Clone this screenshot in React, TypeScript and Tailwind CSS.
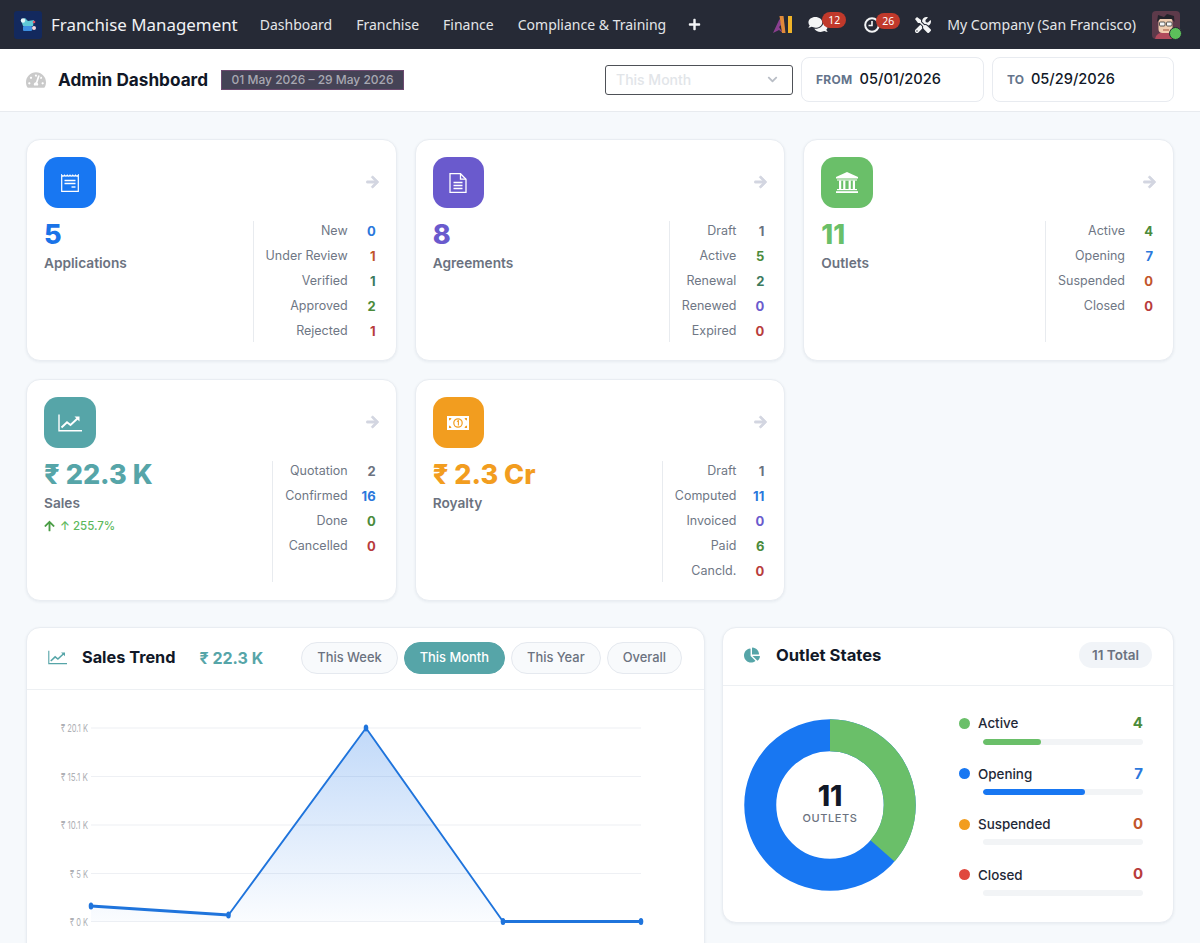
import React from "react";
import { FaArrowRight, FaArrowUp, FaChartPie, FaChevronDown, FaComments, FaPlus, FaTachometerAlt, FaTools } from "react-icons/fa";

const V: Record<string, string> = {
  blue: "text-[#2b78dc]", orange: "text-[#c2552b]", teal: "text-[#3c7a5e]", green: "text-[#4b8b3b]",
  red: "text-[#b83c3c]", gray: "text-[#6b7280]", purple: "text-[#6a5acd]",
};

function LineIcon({ className }: { className: string }) {
  return (
    <svg viewBox="0 0 24 18" className={className} fill="none" stroke="currentColor">
      <path d="M1 0.5V16.8H24" strokeWidth="1.4" />
      <path d="M3.5 13.5L9 8.2L12.5 11L20 4" strokeWidth="1.9" />
      <path d="M16.5 2.6H21.5V7.5Z" fill="currentColor" stroke="none" />
    </svg>
  );
}

function AppIcon() {
  return (
    <svg viewBox="0 0 18 18" className="w-[18px] h-[18px]" fill="none" stroke="white">
      <path d="M0.7 1.2q1.4 2 2.8 0q1.4 2 2.75 0q1.4 2 2.75 0q1.4 2 2.75 0q1.4 2 2.75 0q1.4 2 2.8 0V17.3H0.7Z" strokeWidth="1.2" />
      <path d="M3.5 6.5H14.5M3.5 9.5H14.5" strokeWidth="1.4" />
      <path d="M10.5 13H14.5" strokeWidth="1.4" />
    </svg>
  );
}

function FileIcon() {
  return (
    <svg viewBox="0 0 18 20" className="w-[18px] h-[20px]" fill="none" stroke="white" strokeWidth="1.3">
      <path d="M1 0.7H11.5L17 6.2V19.3H1Z" />
      <path d="M11.5 0.7V6.2H17" />
      <path d="M4.5 9.5H13.5M4.5 12.5H13.5M4.5 15.5H13.5" />
    </svg>
  );
}

function BankIcon() {
  return (
    <svg viewBox="0 0 22 21" className="w-[22px] h-[21px]" fill="white">
      <path d="M11 0L22 5V6.5H0V5Z" />
      <rect x="1" y="7.5" width="20" height="1" />
      <rect x="3" y="8.5" width="2.2" height="8.5" />
      <rect x="7.2" y="8.5" width="2.2" height="8.5" />
      <rect x="12.6" y="8.5" width="2.2" height="8.5" />
      <rect x="16.8" y="8.5" width="2.2" height="8.5" />
      <rect x="1" y="17" width="20" height="1.2" />
      <rect x="0" y="19.2" width="22" height="1.8" />
    </svg>
  );
}

function MoneyIcon() {
  return (
    <svg viewBox="0 0 22 14" className="w-[22px] h-[14px]">
      <path fillRule="evenodd" fill="white" d="M0 0H22V14H0ZM4.5 2H2V4.5Q4 4.2 4.5 2ZM17.5 2Q18 4.2 20 4.5V2ZM2 9.5V12H4.5Q4 9.8 2 9.5ZM20 9.5Q18 9.8 17.5 12H20ZM11 2.2A4.8 4.8 0 1 0 11 11.8A4.8 4.8 0 1 0 11 2.2Z" />
      <circle cx="11" cy="7" r="3.6" fill="white" />
      <path d="M9.9 5.4L11.4 4.7V9.4" stroke="#f29d1f" strokeWidth="1.1" fill="none" />
    </svg>
  );
}

function Card({ icon, bg, color, value, label, stats, trend }: {
  icon: React.ReactNode; bg: string; color: string; value: string; label: string;
  stats: [string, string, string][]; trend?: boolean;
}) {
  return (
    <div className="bg-white rounded-[14px] border border-[#e9edf2] shadow-[0_1px_3px_rgba(30,50,80,0.07)] p-[17px] h-[222px]">
      <div className="flex items-center justify-between h-[51px]">
        <div className={`w-[51.5px] h-[51px] rounded-[14px] flex items-center justify-center ${bg}`}>{icon}</div>
        <FaArrowRight stroke="currentColor" strokeWidth={30} className="w-[13px] h-[14px] mb-[1px] text-[#d3d6e1]" />
      </div>
      <div className="flex justify-between mt-[13px] h-[121px]">
        <div>
          <div className={`text-[27px] leading-[28px] font-extrabold ${color}`}>{value}</div>
          <div className="text-[13.7px] leading-[20px] font-semibold text-[#6b7280] mt-[4px]">{label}</div>
          {trend && (
            <div className="flex items-center text-[11.5px] leading-[16px] font-medium text-[#5cb85c] mt-[5px]">
              <FaArrowUp className="w-[11px] h-[12px] text-[#4a9d45] mr-[5px]" />↑ 255.7%
            </div>
          )}
        </div>
        <div className="border-l border-[#e8ebef] pl-[12px] pr-[3px] flex flex-col gap-[5.1px]">
          {stats.map(([l, v, c]) => (
            <div key={l} className="flex justify-end h-[20px] items-center text-[13px] leading-[20px]">
              <span className="text-[#6f7785] text-[12.5px]">{l}</span>
              <span className={`w-[28px] text-right font-bold ${V[c]}`}>{v}</span>
            </div>
          ))}
        </div>
      </div>
    </div>
  );
}

function Pill({ text, active }: { text: string; active?: boolean }) {
  return (
    <div className={`h-[32px] px-[15px] rounded-full flex items-center text-[12.9px] font-medium border ${active ? "bg-[#56a5a8] border-[#56a5a8] text-white" : "bg-[#f8fafc] border-[#e5e9ef] text-[#6b7280]"}`}>{text}</div>
  );
}

function Legend({ dot, bar, w, label, value, c }: { dot: string; bar: string; w: number; label: string; value: string; c: string }) {
  return (
    <div className="h-[50.4px]">
      <div className="flex items-center h-[20px] pl-[1px]">
        <span className={`w-[11px] h-[11px] rounded-full ${dot}`} />
        <span className="ml-[8px] text-[13.4px] font-medium text-[#1f2937]">{label}</span>
        <span className={`ml-auto text-[15px] font-bold ${V[c]}`}>{value}</span>
      </div>
      <div className="ml-[25px] mt-[5px] h-[6px] rounded-full bg-[#f2f4f6] overflow-hidden">
        <div className={`h-full rounded-full ${bar}`} style={{ width: `${w}%` }} />
      </div>
    </div>
  );
}

function Chart() {
  const ys = [[0, "₹ 20.1 K", 27], [48.5, "₹ 15.1 K", 27], [97, "₹ 10.1 K", 27], [145.5, "₹ 5 K", 18], [193.5, "₹ 0 K", 18]] as [number, string, number][];
  const pts: [number, number][] = [[34, 178], [171.5, 187], [309, 0], [446, 193.5], [584, 193.5]];
  return (
    <svg width="640" height="215" viewBox="0 0 640 215" className="block overflow-visible">
      <defs>
        <linearGradient id="area" x1="0" y1="0" x2="0" y2="1">
          <stop offset="0" stopColor="#1a73e8" stopOpacity="0.27" />
          <stop offset="1" stopColor="#1a73e8" stopOpacity="0.02" />
        </linearGradient>
      </defs>
      {ys.map(([y, t, w]) => (
        <g key={t}>
          <line x1="34" x2="584" y1={y} y2={y} stroke="#eef0f4" strokeWidth="1.2" />
          <text x={31 - w} y={y + 4} textLength={w} lengthAdjust="spacingAndGlyphs" fontSize="11" fill="#aeb0b5" fontFamily="Inter, sans-serif">{t}</text>
        </g>
      ))}
      <path d="M34 178L171.5 187L309 0L446 193.5L584 193.5L34 193.5Z" fill="url(#area)" />
      <path d="M34 178L171.5 187" stroke="#1f74dc" strokeWidth="3" fill="none" />
      <path d="M171.5 187L309 0L446 193.5" stroke="#1f74dc" strokeWidth="1.9" fill="none" />
      <path d="M446 193.5L584 193.5" stroke="#1f74dc" strokeWidth="3" fill="none" />
      {pts.map(([x, y]) => <ellipse key={x} cx={x} cy={y} rx="2.3" ry="3.5" fill="#1f74dc" />)}
    </svg>
  );
}

function Donut() {
  const r = 69.75;
  const c = 2 * Math.PI * r;
  const g = (c * 4) / 11;
  return (
    <div className="relative w-[172px] h-[172px]">
      <svg viewBox="0 0 172 172" className="w-full h-full -rotate-90">
        <circle cx="86" cy="86" r={r} fill="none" stroke="#1877f2" strokeWidth="32" />
        <circle cx="86" cy="86" r={r} fill="none" stroke="#6abf69" strokeWidth="32" strokeDasharray={`${g} ${c - g}`} />
      </svg>
      <div className="absolute inset-0 flex flex-col items-center justify-center pb-[5px]">
        <div className="text-[28px] leading-[30px] font-extrabold text-[#111827]">11</div>
        <div className="text-[11px] leading-[14px] font-medium tracking-[0.6px] text-[#6b7280]">OUTLETS</div>
      </div>
    </div>
  );
}

function Avatar() {
  return (
    <div className="relative w-[28px] h-[28px]">
      <svg viewBox="0 0 28 28" className="w-full h-full rounded-[4px]">
        <rect width="28" height="28" fill="#5d3a4a" />
        <path d="M3 28Q4 21 14 21Q24 21 25 28Z" fill="#b04a5c" />
        <rect x="6.5" y="7" width="14" height="15" rx="4" fill="#f1cdb0" />
        <path d="M5 11L6 4L12 6L15 3L22 5L22.5 11L20 8H8Z" fill="#23232b" />
        <rect x="7.5" y="11" width="5.5" height="4" rx="1" fill="#f5f5f5" stroke="#333" strokeWidth="0.8" />
        <rect x="14.5" y="11" width="5.5" height="4" rx="1" fill="#f5f5f5" stroke="#333" strokeWidth="0.8" />
        <path d="M11 19H17" stroke="#a3523f" strokeWidth="1" />
      </svg>
      <span className="absolute right-[-1.5px] bottom-[-1.5px] w-[13px] h-[13px] rounded-full bg-[#5cc05a] border-[1.5px] border-[#262a36]" />
    </div>
  );
}

function Badge({ t, left }: { t: string; left: string }) {
  return <span className={`absolute ${left} top-[-4px] h-[16px] w-[24px] rounded-full bg-[#c0392b] text-white text-[10.5px] leading-[16px] text-center`}>{t}</span>;
}

export default function App() {
  return (
    <div className="h-[943px] overflow-hidden bg-[#f6f9fc] font-['Inter',sans-serif]">
      <nav className="h-[49px] bg-[#262a36] flex items-center pl-[14px] pr-[20px] font-['Noto_Sans',sans-serif] text-[#e3e5e8]">
        <div className="w-[28px] h-[28px] rounded-[3px] bg-[#13295e] flex items-center justify-center">
          <svg viewBox="0 0 18 16" className="w-[18px] h-[16px]">
            <path d="M2 3L6 1L9 4L15 3L14 9H4Z" fill="#5fc9d6" />
            <circle cx="4" cy="3.5" r="2.2" fill="#e6f6f8" />
            <rect x="4" y="9" width="9" height="5" rx="1" fill="#3d8fe0" />
            <circle cx="15" cy="11" r="2" fill="#f3d6dc" />
            <circle cx="15" cy="5" r="1.3" fill="#e25563" />
          </svg>
        </div>
        <span className="ml-[9px] text-[16.9px] text-[#f1f2f4]">Franchise Management</span>
        <div className="ml-[22px] flex items-center gap-[24px] text-[14px]">
          <span>Dashboard</span>
          <span>Franchise</span>
          <span>Finance</span>
          <span>Compliance &amp; Training</span>
          <FaPlus className="w-[13px] h-[13px] text-[#f3f4f6] ml-[-2px]" />
        </div>
        <div className="ml-auto flex items-center">
          <svg viewBox="0 0 20 17" className="w-[20px] h-[17px]">
            <path d="M0 17L6.5 3L9 8L6 11L10 17L6 14Z" fill="#8a3f8f" />
            <path d="M6.5 0H10.5L12.5 17H9Z" fill="#e08a3a" />
            <rect x="15" y="0" width="4" height="17" fill="#f0b429" />
          </svg>
          <div className="relative ml-[15px]">
            <FaComments className="w-[20px] h-[17px] text-[#f4f5f6]" />
            <Badge t="12" left="left-[14px]" />
          </div>
          <div className="relative ml-[36px] mr-[35px]">
            <svg viewBox="0 0 16 16" className="w-[16px] h-[16px]" fill="none" stroke="#f4f5f6" strokeWidth="2">
              <circle cx="8" cy="8" r="6.8" />
              <path d="M8 4V8.5H4.5" strokeWidth="1.6" />
            </svg>
            <Badge t="26" left="left-[12px]" />
          </div>
          <FaTools className="w-[16px] h-[16px] text-[#f4f5f6]" />
          <span className="ml-[16px] text-[14.1px]">My Company (San Francisco)</span>
          <div className="ml-[16px]"><Avatar /></div>
        </div>
      </nav>

      <header className="h-[63px] bg-white border-b border-[#e8ebef] flex items-center pl-[26px] pr-[26px]">
        <FaTachometerAlt className="w-[20px] h-[18px] text-[#cacaca]" />
        <h1 className="ml-[12px] text-[17.2px] font-bold text-[#111827]">Admin Dashboard</h1>
        <div className="ml-[13px] h-[20px] w-[183px] mt-[-1px] bg-[#454356] border border-[#6d4a70] text-[#a8a8b2] text-[12px] font-medium flex items-center justify-center">01 May 2026 – 29 May 2026</div>
        <div className="ml-auto h-[30px] w-[188px] mt-[-1px] border border-[#4e5157] rounded-[3px] flex items-center justify-between pl-[10px] pr-[14px] text-[14px] font-medium text-[#e2e5e9]">
          This Month
          <FaChevronDown className="w-[11px] h-[11px] text-[#b9bec6]" />
        </div>
        <div className="ml-[8px] h-[45px] w-[183px] mt-[-1px] pt-[1px] border border-[#e8ebf0] rounded-[8px] flex items-center pl-[14px]">
          <span className="text-[12px] font-bold text-[#64748b] tracking-[0.3px]">FROM</span>
          <span className="ml-[7px] text-[14.6px] font-medium text-[#111827]">05/01/2026</span>
        </div>
        <div className="ml-[8px] h-[45px] w-[182px] mt-[-1px] pt-[1px] border border-[#e8ebf0] rounded-[8px] flex items-center pl-[14px]">
          <span className="text-[12px] font-bold text-[#64748b]">TO</span>
          <span className="ml-[7px] text-[14.6px] font-medium text-[#111827]">05/29/2026</span>
        </div>
      </header>

      <main className="px-[26px] pt-[27px]">
        <div className="grid grid-cols-3 gap-x-[18px] gap-y-[18px]">
          <Card icon={<AppIcon />} bg="bg-[#1877f2]" color="text-[#1a73e8]" value="5" label="Applications"
            stats={[["New", "0", "blue"], ["Under Review", "1", "orange"], ["Verified", "1", "teal"], ["Approved", "2", "green"], ["Rejected", "1", "red"]]} />
          <Card icon={<FileIcon />} bg="bg-[#6a5acd]" color="text-[#6a5acd]" value="8" label="Agreements"
            stats={[["Draft", "1", "gray"], ["Active", "5", "green"], ["Renewal", "2", "teal"], ["Renewed", "0", "purple"], ["Expired", "0", "red"]]} />
          <Card icon={<BankIcon />} bg="bg-[#6abf69]" color="text-[#6abf69]" value="11" label="Outlets"
            stats={[["Active", "4", "green"], ["Opening", "7", "blue"], ["Suspended", "0", "orange"], ["Closed", "0", "red"]]} />
          <Card icon={<LineIcon className="w-[24px] h-[18px] text-white" />} bg="bg-[#56a5a8]" color="text-[#56a5a8]" value="₹ 22.3 K" label="Sales" trend
            stats={[["Quotation", "2", "gray"], ["Confirmed", "16", "blue"], ["Done", "0", "green"], ["Cancelled", "0", "red"]]} />
          <Card icon={<MoneyIcon />} bg="bg-[#f29d1f]" color="text-[#f29d1f]" value="₹ 2.3 Cr" label="Royalty"
            stats={[["Draft", "1", "gray"], ["Computed", "11", "blue"], ["Invoiced", "0", "purple"], ["Paid", "6", "green"], ["Cancld.", "0", "red"]]} />
        </div>

        <div className="grid grid-cols-[679px_452px] gap-x-[17px] mt-[26px] items-start">
          <section className="bg-white rounded-[14px] border border-[#e9edf2] shadow-[0_1px_3px_rgba(30,50,80,0.07)] h-[400px]">
            <div className="h-[62px] pb-[2px] border-b border-[#edf0f3] flex items-center pl-[21px] pr-[22px]">
              <LineIcon className="w-[19px] h-[15px] text-[#56a5a8]" />
              <span className="ml-[15px] text-[16.3px] font-bold text-[#111827]">Sales Trend</span>
              <span className="ml-[24px] text-[16px] font-bold text-[#56a5a8]">₹ 22.3 K</span>
              <div className="ml-auto flex gap-[6px]">
                <Pill text="This Week" />
                <Pill text="This Month" active />
                <Pill text="This Year" />
                <Pill text="Overall" />
              </div>
            </div>
            <div className="pl-[30px] pt-[38px]"><Chart /></div>
          </section>

          <section className="bg-white rounded-[14px] border border-[#e9edf2] shadow-[0_1px_3px_rgba(30,50,80,0.07)] h-[296px]">
            <div className="h-[58px] pb-[3px] border-b border-[#edf0f3] flex items-center pl-[21px] pr-[21px]">
              <FaChartPie className="w-[16px] h-[16px] text-[#56a5a8]" />
              <span className="ml-[16px] text-[16.6px] font-bold text-[#111827]">Outlet States</span>
              <span className="ml-auto h-[26px] px-[13px] rounded-full bg-[#f1f4f8] flex items-center text-[13.5px] font-semibold text-[#6b7280]">11 Total</span>
            </div>
            <div className="flex items-start pl-[21px] pr-[30px] pt-[33px]">
              <Donut />
              <div className="ml-[42px] flex-1 mt-[-5.5px]">
                <Legend dot="bg-[#6abf69]" bar="bg-[#6abf69]" w={36.4} label="Active" value="4" c="green" />
                <Legend dot="bg-[#1877f2]" bar="bg-[#1877f2]" w={63.6} label="Opening" value="7" c="blue" />
                <Legend dot="bg-[#f29d1f]" bar="bg-[#f29d1f]" w={0} label="Suspended" value="0" c="orange" />
                <Legend dot="bg-[#e0483e]" bar="bg-[#e0483e]" w={0} label="Closed" value="0" c="red" />
              </div>
            </div>
          </section>
        </div>
      </main>
    </div>
  );
}
